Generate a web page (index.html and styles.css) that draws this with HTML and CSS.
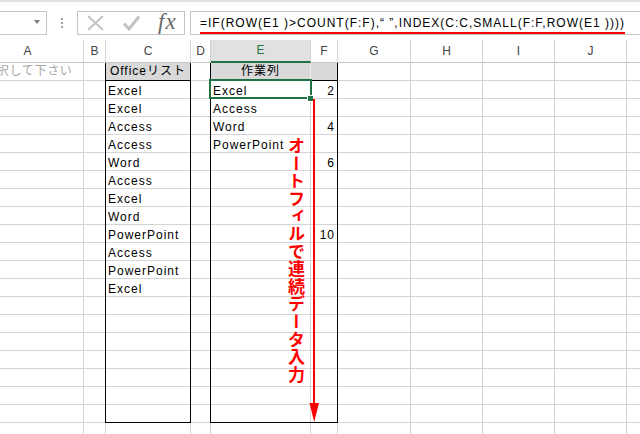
FILE: index.html
```html
<!DOCTYPE html>
<html lang="ja">
<head>
<meta charset="utf-8">
<title>Excel</title>
<link rel="stylesheet" href="styles.css">
</head>
<body>
<div class="fbar">
  <div class="namebox"><span class="dd"></span></div>
  <div class="grip"><i></i><i></i><i></i></div>
  <div class="fnbtns">
    <svg class="ico-x" width="17" height="16" viewBox="0 0 17 16"><path d="M1 1 L16 15 M16 1 L1 15" stroke="#c4c4c4" stroke-width="2" fill="none"/></svg>
    <svg class="ico-ok" width="17" height="16" viewBox="0 0 17 16"><path d="M1 8.5 L6 14 L16 1.5" stroke="#c4c4c4" stroke-width="3" fill="none"/></svg>
    <span class="fx">fx</span>
  </div>
  <div class="formula"><span class="ftext">=IF(ROW(E1 )&gt;COUNT(F:F),“ ”,INDEX(C:C,SMALL(F:F,ROW(E1 ))))</span></div>
</div>

<div class="colheads">
  <div class="ch w-a">A</div>
  <div class="ch w-b">B</div>
  <div class="ch w-c">C</div>
  <div class="ch w-d">D</div>
  <div class="ch w-e sel-head">E</div>
  <div class="ch w-f">F</div>
  <div class="ch w-g">G</div>
  <div class="ch w-h">H</div>
  <div class="ch w-i">I</div>
  <div class="ch w-j">J</div>
  <div class="ch w-k"></div>
</div>

<div class="sheet">
  <div class="a1">選択して下さい</div>

  <div class="boxc">
    <div class="hcell">Officeリスト</div>
    <div class="cell">Excel</div>
    <div class="cell">Excel</div>
    <div class="cell">Access</div>
    <div class="cell">Access</div>
    <div class="cell">Word</div>
    <div class="cell">Access</div>
    <div class="cell">Excel</div>
    <div class="cell">Word</div>
    <div class="cell">PowerPoint</div>
    <div class="cell">Access</div>
    <div class="cell">PowerPoint</div>
    <div class="cell">Excel</div>
  </div>

  <div class="boxe">
    <div class="hcell he">作業列</div><div class="hcell hf"></div>
    <div class="cell selcell">Excel<span class="sel"><span class="handle"></span></span></div><div class="cell num">2</div>
    <div class="cell">Access</div><div class="cell num"></div>
    <div class="cell">Word</div><div class="cell num">4</div>
    <div class="cell">PowerPoint</div><div class="cell num"></div>
    <div class="cell"></div><div class="cell num">6</div>
    <div class="cell"></div><div class="cell num"></div>
    <div class="cell"></div><div class="cell num"></div>
    <div class="cell"></div><div class="cell num"></div>
    <div class="cell"></div><div class="cell num">10</div>
  </div>

  <svg class="arrow" width="20" height="332" viewBox="0 0 20 332">
    <rect x="8" y="6" width="2" height="306" fill="#ff0000"/>
    <polygon points="4.5,310 14,310 9.2,329" fill="#ff0000"/>
  </svg>
  <div class="note">オートフィルで連続データ入力</div>
</div>
</body>
</html>
```
FILE: styles.css
```css
* {
  box-sizing: border-box;
  margin: 0;
  padding: 0;
}

html, body {
  width: 640px;
  height: 434px;
  overflow: hidden;
  background: #fff;
}

body {
  font-family: "Liberation Sans", "Noto Sans CJK JP", sans-serif;
  font-size: 12px;
  color: #000;
}

/* formula bar */
.fbar {
  height: 40px;
  border-top: 2px solid #e3e3e3;
  padding-top: 9px;
  display: flex;
  align-items: flex-start;
}

.namebox {
  flex: none;
  margin-left: -4px;
  width: 51px;
  height: 24px;
  border: 1px solid #c6c6c6;
  display: flex;
  align-items: center;
  justify-content: flex-end;
  padding-right: 6px;
}

.dd {
  margin-top: -2px;
  width: 0;
  height: 0;
  border-left: 3.5px solid transparent;
  border-right: 3.5px solid transparent;
  border-top: 4px solid #7a7a7a;
}

.grip {
  flex: none;
  margin-left: 14px;
  margin-top: 7px;
  display: flex;
  flex-direction: column;
  gap: 2px;
}

.grip i {
  display: block;
  width: 2px;
  height: 2px;
  background: #a0a0a0;
}

.fnbtns {
  flex: none;
  margin-left: 14px;
  width: 108px;
  height: 24px;
  border: 1px solid #c6c6c6;
  display: flex;
  align-items: center;
  padding-left: 9px;
}

.ico-ok {
  margin-left: 19px;
}

.fx {
  margin-left: 18px;
  font-family: "Liberation Serif", serif;
  font-style: italic;
  font-size: 23px;
  line-height: 22px;
  letter-spacing: 1px;
  color: #666;
  margin-top: -2px;
}

.formula {
  flex: 1;
  margin-left: 5px;
  margin-right: -4px;
  height: 24px;
  border: 1px solid #c6c6c6;
  padding: 3px 0 0 9px;
  white-space: nowrap;
  overflow: hidden;
}

.ftext {
  display: inline-block;
  font-size: 12px;
  line-height: 17px;
  letter-spacing: 1px;
  border-bottom: 2px solid #ff0000;
}

/* column headers */
.colheads {
  display: flex;
  height: 23px;
}

.ch {
  flex: none;
  height: 23px;
  border-right: 1px solid #d4d4d4;
  border-bottom: 1px solid #c6c6c6;
  line-height: 22px;
  text-align: center;
  color: #444;
  font-size: 12px;
}

.w-a { width: 84px; padding-right: 28px; }
.w-b { width: 22px; }
.w-c { width: 85px; }
.w-d { width: 20px; }
.w-e { width: 100px; }
.w-f { width: 27px; }
.w-g { width: 73px; }
.w-h { width: 72px; }
.w-i { width: 72px; }
.w-j { width: 72px; }
.w-k { flex: 1; border-right: none; }

.sel-head {
  background: #e1e1e1;
  color: #217346;
  border-bottom: 2px solid #217346;
  line-height: 21px;
}

/* sheet body */
.sheet {
  position: relative;
  height: 371px;
  overflow: hidden;
  display: grid;
  grid-template-columns: 84px 22px 85px 20px 100px 27px 73px 72px 72px 72px 1fr;
  grid-template-rows: repeat(21, 18px);
  background-image:
    linear-gradient(#d4d4d4, #d4d4d4),
    linear-gradient(#d4d4d4, #d4d4d4),
    linear-gradient(#d4d4d4, #d4d4d4),
    linear-gradient(#d4d4d4, #d4d4d4),
    linear-gradient(#d4d4d4, #d4d4d4),
    linear-gradient(#d4d4d4, #d4d4d4),
    linear-gradient(#d4d4d4, #d4d4d4),
    linear-gradient(#d4d4d4, #d4d4d4),
    linear-gradient(#d4d4d4, #d4d4d4),
    linear-gradient(#d4d4d4, #d4d4d4),
    repeating-linear-gradient(to bottom, transparent 0 17px, #d4d4d4 17px 18px);
  background-size:
    1px 100%, 1px 100%, 1px 100%, 1px 100%, 1px 100%,
    1px 100%, 1px 100%, 1px 100%, 1px 100%, 1px 100%,
    100% 100%;
  background-position:
    83px 0, 105px 0, 190px 0, 210px 0, 310px 0,
    337px 0, 410px 0, 482px 0, 554px 0, 626px 0,
    0 0;
  background-repeat:
    no-repeat, no-repeat, no-repeat, no-repeat, no-repeat,
    no-repeat, no-repeat, no-repeat, no-repeat, no-repeat,
    repeat;
}

.a1 {
  grid-column: 1;
  grid-row: 1;
  color: #a6a6a6;
  white-space: nowrap;
  overflow: hidden;
  text-indent: -16px;
  padding-top: 1px;
  line-height: 15px;
  letter-spacing: 0.7px;
}

.boxc {
  grid-column: 3;
  grid-row: 1 / span 20;
  margin: -1px 0 0 -1px;
  border: 1px solid #000;
  display: flex;
  flex-direction: column;
}

.boxe {
  grid-column: 5 / span 2;
  grid-row: 1 / span 20;
  margin: -1px 0 0 -1px;
  border: 1px solid #000;
  display: grid;
  grid-template-columns: 100px 26px;
  grid-auto-rows: 18px;
  align-content: start;
}

.hcell {
  flex: none;
  height: 18px;
  background: #d9d9d9;
  border-bottom: 1px solid #000;
  text-align: center;
  padding-top: 1px;
  line-height: 15px;
  letter-spacing: 1px;
  white-space: nowrap;
}

.he {
  border-right: 1px solid #ebebeb;
}

.cell {
  flex: none;
  height: 18px;
  padding: 3px 0 0 2px;
  line-height: 15px;
  letter-spacing: 1px;
  white-space: nowrap;
}

.num {
  text-align: right;
  padding: 3px 2px 0 0;
}

.selcell {
  position: relative;
}

.sel {
  position: absolute;
  left: -2px;
  top: -2px;
  width: 103px;
  height: 20px;
  border: 2px solid #217346;
}

.handle {
  position: absolute;
  right: -3px;
  bottom: -4px;
  width: 5px;
  height: 5px;
  background: #217346;
  outline: 1px solid #fff;
}

/* annotation */
.arrow {
  position: absolute;
  left: 305px;
  top: 30px;
}

.note {
  position: absolute;
  left: 288px;
  top: 74px;
  writing-mode: vertical-rl;
  text-orientation: upright;
  font-family: "Noto Sans CJK JP", sans-serif;
  font-weight: 700;
  font-size: 17px;
  line-height: 17px;
  letter-spacing: 0.6px;
  color: #ff0000;
}
```
